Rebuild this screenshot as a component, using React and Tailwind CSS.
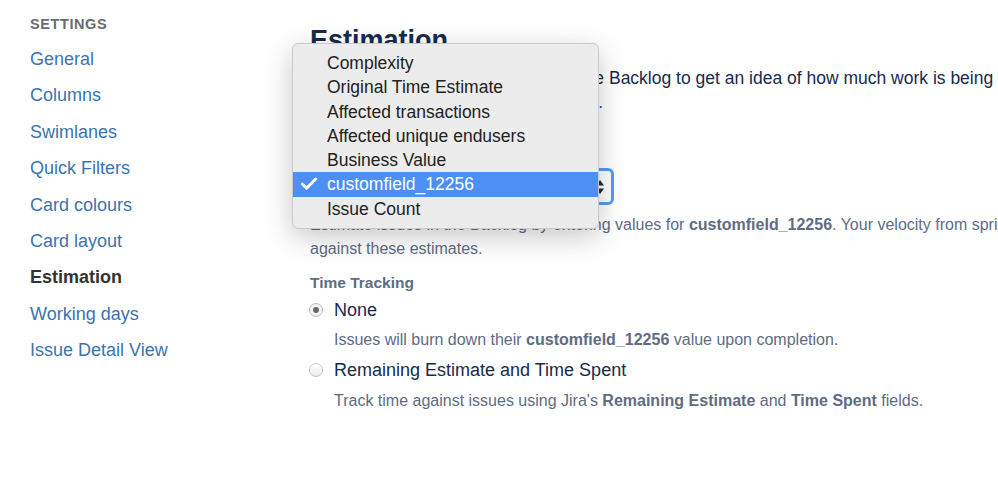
import { Check } from 'lucide-react'

const links = [
  'General',
  'Columns',
  'Swimlanes',
  'Quick Filters',
  'Card colours',
  'Card layout',
  'Estimation',
  'Working days',
  'Issue Detail View',
]

const options = [
  'Complexity',
  'Original Time Estimate',
  'Affected transactions',
  'Affected unique endusers',
  'Business Value',
  'customfield_12256',
  'Issue Count',
]

function Radio({ checked }) {
  return (
    <span
      className={
        'w-[14px] h-[14px] rounded-full border flex items-center justify-center shrink-0 ' +
        (checked
          ? 'border-[#b9b9b9] bg-[#f4f4f4]'
          : 'border-[#c4c4c4] bg-gradient-to-b from-white to-[#ececec]')
      }
    >
      {checked && <span className="w-[6px] h-[6px] rounded-full bg-[#6b6b6b]" />}
    </span>
  )
}

export default function App() {
  return (
    <div
      className="relative w-[998px] h-[491px] overflow-hidden bg-white flex"
      style={{ fontFamily: '"Liberation Sans", Arial, sans-serif' }}
    >
      {/* sidebar */}
      <div className="w-[310px] shrink-0 pl-[30px] pt-[15px]">
        <div className="text-[14.5px] font-bold tracking-[0.04em] text-[#6b6b6b] h-[18px] leading-[18px]">
          SETTINGS
        </div>
        <div className="mt-[8px] flex flex-col">
          {links.map((l) => (
            <div
              key={l}
              className={
                'h-[36.4px] leading-[36.4px] text-[18px] ' +
                (l === 'Estimation' ? 'font-bold text-[#333333]' : 'text-[#3b73af]')
              }
            >
              {l}
            </div>
          ))}
        </div>
      </div>

      {/* main */}
      <div className="w-[800px] shrink-0 pt-[22px] text-[#172b4d]">
        <h1 className="text-[27px] leading-[36px] font-bold">Estimation</h1>
        <p className="mt-[8px] text-[17.5px] leading-[24px] whitespace-nowrap">
          Your teams can estimate issues in the Backlog to get an idea of how much work is being committed to
        </p>
        <p className="w-[293px] text-right text-[17.5px] leading-[24px] whitespace-nowrap">
          sprints. <span className="text-[#0052cc]">Learn more about estimation.</span>
        </p>
        <div className="mt-[28px] text-[15.5px] font-bold text-[#5e6c84] leading-[20px]">
          Estimation Statistic
        </div>
        <div className="mt-[6px] w-[304px] h-[37px] rounded-[6px] border-[3px] border-[#5a9bf5] bg-white flex items-center justify-between pl-[12px] pr-[6px]">
          <span className="text-[16px]">customfield_12256</span>
          <svg width="10" height="16" viewBox="0 0 10 16">
            <path d="M5 1 L9 6.5 L1 6.5 Z" fill="#1b2a45" />
            <path d="M5 15 L9 9.5 L1 9.5 Z" fill="#1b2a45" />
          </svg>
        </div>
        <p className="mt-[8px] text-[16px] leading-[24px] text-[#5e6c84] whitespace-nowrap">
          Estimate issues in the Backlog by entering values for{' '}
          <b>customfield_12256</b>. Your velocity from sprints will be measured
        </p>
        <p className="text-[16px] leading-[24px] text-[#5e6c84]">against these estimates.</p>

        <div className="mt-[12px] text-[15.5px] font-bold text-[#5e6c84] leading-[20px]">
          Time Tracking
        </div>
        <div className="mt-[7px] flex items-center gap-[11px] -ml-[1px] h-[20px]">
          <Radio checked />
          <span className="text-[18px]">None</span>
        </div>
        <p className="mt-[10px] pl-[24px] text-[16px] leading-[20px] text-[#5e6c84]">
          Issues will burn down their <b>customfield_12256</b> value upon completion.
        </p>
        <div className="mt-[10px] flex items-center gap-[11px] -ml-[1px] h-[20px]">
          <Radio />
          <span className="text-[18px]">Remaining Estimate and Time Spent</span>
        </div>
        <p className="mt-[11px] pl-[24px] text-[16px] leading-[20px] text-[#5e6c84]">
          Track time against issues using Jira&apos;s <b>Remaining Estimate</b> and{' '}
          <b>Time Spent</b> fields.
        </p>
      </div>

      {/* open select menu */}
      <div className="absolute left-[292px] top-[43px] w-[307px] rounded-[6px] border border-[#c9c9c9] bg-[#ececec] py-[7px] shadow-[0_8px_28px_rgba(0,0,0,0.22)]">
        {options.map((o) => {
          const sel = o === 'customfield_12256'
          return (
            <div
              key={o}
              className={
                'relative h-[24.3px] leading-[24px] pl-[34px] text-[17.5px] ' +
                (sel ? 'bg-[#4d8ff5] text-white' : 'text-[#222222]')
              }
            >
              {sel && (
                <Check
                  className="absolute left-[6px] top-[2px]"
                  size={20}
                  strokeWidth={3.5}
                  color="white"
                />
              )}
              {o}
            </div>
          )
        })}
      </div>
    </div>
  )
}
